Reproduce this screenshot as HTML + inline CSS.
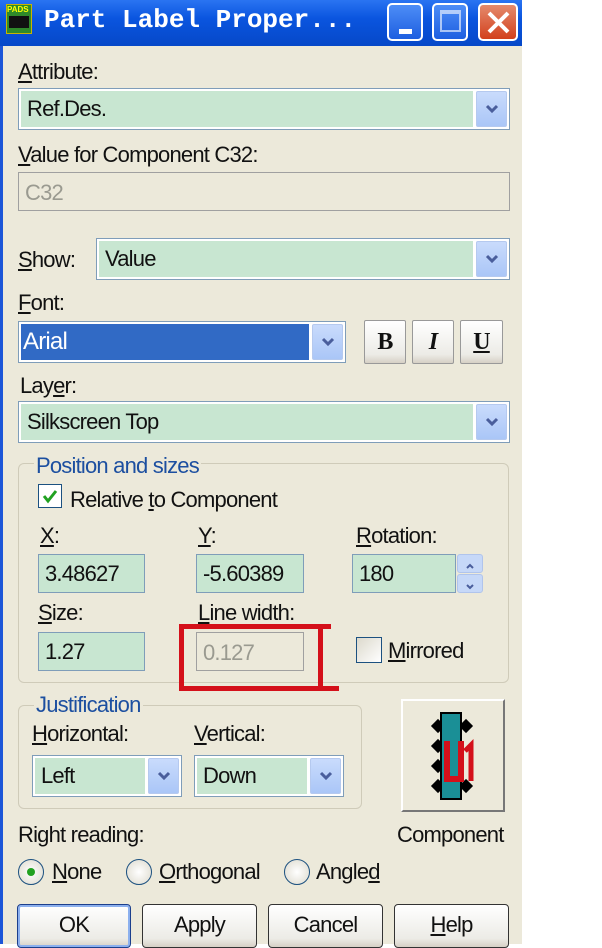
<!DOCTYPE html>
<html><head><meta charset="utf-8"><style>
*{margin:0;padding:0;box-sizing:border-box}
body{width:602px;height:944px;background:#fff;position:relative;overflow:hidden;font-family:"Liberation Sans",sans-serif;font-size:22px;color:#111;letter-spacing:-0.8px}
.a{position:absolute}
.dlg{left:0;top:0;width:522px;height:944px;background:#ECE9DA;border-left:3px solid #1C56D8}
.tb{left:0;top:0;width:522px;height:46px;background:linear-gradient(#2a74f2,#0a55df 40%,#0648c8)}
.tt{left:44px;top:5px;font-family:"Liberation Mono",monospace;font-weight:bold;font-size:26px;color:#fff;letter-spacing:0}
.wb{top:3px;width:36px;height:38px;border:2px solid #fff;border-radius:5px;background:linear-gradient(#4d8df7,#1e5fe0)}
.lbl{white-space:nowrap;margin-top:2px}
.cb{border:1px solid #7f9db9;background:#fff;padding:2px}
.cb .in{position:absolute;left:2px;top:2px;bottom:2px;background:#C8E6D1}
.cb .tx{position:absolute;left:8px;top:50%;transform:translateY(-50%);white-space:nowrap}
.arr{position:absolute;top:2px;bottom:2px;right:2px;width:31px;background:linear-gradient(#c9dbfc,#aac6f7);border:1px solid #b5c9ef;border-radius:2px}
.arr svg{position:absolute;left:8px;top:50%;margin-top:-5px}
.fld{border:1px solid #7f9db9;background:#C8E6D1}
.fld span{position:absolute;left:6px;top:50%;transform:translateY(-50%)}
.btn{border:1px solid #333;border-radius:4px;background:linear-gradient(#fff,#ecebe6 80%,#d6d0c5);text-align:center;line-height:40px}
.grp{border:1px solid #cfcbb9;border-radius:6px}
.gl{background:#ECE9DA;color:#1c4fa0;padding:0 2px}
.rad{width:26px;height:26px;border-radius:50%;border:1px solid #1c5180;background:radial-gradient(#fff,#dcd9cc)}
u{text-decoration:underline}
</style></head><body>
<div class="a dlg"></div>
<div class="a tb"></div>
<div class="a" style="left:6px;top:4px;width:26px;height:30px;background:#2f8a2a;border:1px solid #c9b400"><div style="font-size:8px;color:#ff0;font-weight:bold;letter-spacing:0">PADS</div><div style="margin:2px;height:12px;background:#111"></div></div>
<div class="a tt">Part Label Proper...</div>
<div class="a wb" style="left:387px"><div class="a" style="left:10px;top:24px;width:13px;height:5px;background:#fff"></div></div>
<div class="a wb" style="left:432px"><div class="a" style="left:6px;top:5px;width:21px;height:22px;border:2px solid #fff;border-top-width:4px;opacity:.6"></div></div>
<div class="a wb" style="left:478px;width:40px;background:linear-gradient(#e58a6c,#d2401d)"><svg class="a" style="left:6px;top:5px" width="25" height="25"><path d="M3 3L22 22M22 3L3 22" stroke="#fff" stroke-width="4"/></svg></div>

<div class="a lbl" style="left:18px;top:57px"><u>A</u>ttribute:</div>
<div class="a cb" style="left:18px;top:88px;width:492px;height:42px"><div class="in" style="right:36px"></div><div class="tx">Ref.Des.</div><div class="arr"><svg width="14" height="10"><path d="M2 2L7 7L12 2" stroke="#4a5e9c" stroke-width="3" fill="none"/></svg></div></div>
<div class="a lbl" style="left:18px;top:140px"><u>V</u>alue for Component C32:</div>
<div class="a" style="left:18px;top:172px;width:492px;height:39px;border:1px solid #a0a0a0;background:#ECE9DA"><span class="a" style="left:6px;top:7px;color:#9a9a90">C32</span></div>

<div class="a lbl" style="left:18px;top:245px"><u>S</u>how:</div>
<div class="a cb" style="left:96px;top:238px;width:414px;height:42px"><div class="in" style="right:36px"></div><div class="tx">Value</div><div class="arr"><svg width="14" height="10"><path d="M2 2L7 7L12 2" stroke="#4a5e9c" stroke-width="3" fill="none"/></svg></div></div>
<div class="a lbl" style="left:18px;top:288px"><u>F</u>ont:</div>
<div class="a cb" style="left:18px;top:321px;width:328px;height:42px"><div class="in" style="right:36px;background:#316AC5"></div><div class="tx" style="color:#fff;left:4px;font-size:24px">Arial</div><div class="arr"><svg width="14" height="10"><path d="M2 2L7 7L12 2" stroke="#4a5e9c" stroke-width="3" fill="none"/></svg></div></div>
<div class="a btn" style="left:364px;top:320px;width:42px;height:44px;border-color:#999;border-radius:2px;font-family:'Liberation Serif',serif;font-weight:bold;font-size:24px;line-height:42px">B</div>
<div class="a btn" style="left:412px;top:320px;width:42px;height:44px;border-color:#999;border-radius:2px;font-family:'Liberation Serif',serif;font-weight:bold;font-style:italic;font-size:24px;line-height:42px">I</div>
<div class="a btn" style="left:460px;top:320px;width:43px;height:44px;border-color:#999;border-radius:2px;font-family:'Liberation Serif',serif;font-weight:bold;font-size:24px;line-height:42px"><u>U</u></div>
<div class="a lbl" style="left:20px;top:371px">Lay<u>e</u>r:</div>
<div class="a cb" style="left:18px;top:401px;width:492px;height:42px"><div class="in" style="right:36px"></div><div class="tx">Silkscreen Top</div><div class="arr"><svg width="14" height="10"><path d="M2 2L7 7L12 2" stroke="#4a5e9c" stroke-width="3" fill="none"/></svg></div></div>

<div class="a grp" style="left:18px;top:463px;width:491px;height:220px"></div>
<div class="a gl lbl" style="left:34px;top:451px">Position and sizes</div>
<div class="a" style="left:38px;top:484px;width:24px;height:24px;border:1px solid #1c5180;background:#fff"><svg width="22" height="22"><path d="M5 11L9 16L17 6" stroke="#21a121" stroke-width="3" fill="none"/></svg></div>
<div class="a lbl" style="left:70px;top:485px">Relative <u>t</u>o Component</div>
<div class="a lbl" style="left:40px;top:521px"><u>X</u>:</div>
<div class="a lbl" style="left:198px;top:521px"><u>Y</u>:</div>
<div class="a lbl" style="left:356px;top:521px"><u>R</u>otation:</div>
<div class="a fld" style="left:38px;top:554px;width:107px;height:39px"><span>3.48627</span></div>
<div class="a fld" style="left:196px;top:554px;width:108px;height:39px"><span>-5.60389</span></div>
<div class="a fld" style="left:352px;top:554px;width:104px;height:39px"><span>180</span></div>
<div class="a" style="left:457px;top:554px;width:26px;height:19px;background:#c6d8f8;border:1px solid #b0c4ec;border-radius:3px"><svg width="24" height="17"><path d="M9 10L12 7L15 10" stroke="#4a5e9c" stroke-width="2" fill="none"/></svg></div>
<div class="a" style="left:457px;top:574px;width:26px;height:19px;background:#c6d8f8;border:1px solid #b0c4ec;border-radius:3px"><svg width="24" height="17"><path d="M9 7L12 10L15 7" stroke="#4a5e9c" stroke-width="2" fill="none"/></svg></div>
<div class="a lbl" style="left:38px;top:598px"><u>S</u>ize:</div>
<div class="a lbl" style="left:198px;top:598px"><u>L</u>ine width:</div>
<div class="a fld" style="left:38px;top:632px;width:107px;height:39px"><span>1.27</span></div>
<div class="a" style="left:196px;top:632px;width:108px;height:39px;border:1px solid #a0a0a0"><span class="a" style="left:6px;top:7px;color:#9a9a90">0.127</span></div>
<div class="a" style="left:356px;top:637px;width:26px;height:26px;border:1px solid #1c5180;background:linear-gradient(135deg,#dcd9cc,#fff)"></div>
<div class="a lbl" style="left:388px;top:636px"><u>M</u>irrored</div>
<div class="a" style="left:179px;top:624px;width:152px;height:5px;background:#d4101a"></div>
<div class="a" style="left:179px;top:624px;width:5px;height:66px;background:#d4101a"></div>
<div class="a" style="left:179px;top:686px;width:160px;height:5px;background:#d4101a"></div>
<div class="a" style="left:318px;top:624px;width:5px;height:66px;background:#d4101a"></div>

<div class="a grp" style="left:18px;top:705px;width:344px;height:104px"></div>
<div class="a gl lbl" style="left:34px;top:690px">Justification</div>
<div class="a lbl" style="left:32px;top:719px"><u>H</u>orizontal:</div>
<div class="a lbl" style="left:194px;top:719px"><u>V</u>ertical:</div>
<div class="a cb" style="left:32px;top:755px;width:150px;height:42px"><div class="in" style="right:36px"></div><div class="tx">Left</div><div class="arr"><svg width="14" height="10"><path d="M2 2L7 7L12 2" stroke="#4a5e9c" stroke-width="3" fill="none"/></svg></div></div>
<div class="a cb" style="left:194px;top:755px;width:150px;height:42px"><div class="in" style="right:36px"></div><div class="tx">Down</div><div class="arr"><svg width="14" height="10"><path d="M2 2L7 7L12 2" stroke="#4a5e9c" stroke-width="3" fill="none"/></svg></div></div>
<div class="a" style="left:401px;top:699px;width:104px;height:113px;border:2px solid;border-color:#fff #777 #777 #fff;background:#ECE9DA">
<svg width="100" height="109"><g fill="#000"><rect x="30" y="20" width="10" height="10" transform="rotate(45 35 25)"/><rect x="30" y="40" width="10" height="10" transform="rotate(45 35 45)"/><rect x="30" y="60" width="10" height="10" transform="rotate(45 35 65)"/><rect x="30" y="80" width="10" height="10" transform="rotate(45 35 85)"/><rect x="58" y="20" width="10" height="10" transform="rotate(45 63 25)"/><rect x="58" y="80" width="10" height="10" transform="rotate(45 63 85)"/></g><rect x="38" y="12" width="20" height="86" fill="#1a8f96" stroke="#000" stroke-width="2"/><path d="M44 40V78H58V40" stroke="#d4101a" stroke-width="6" fill="none"/><path d="M62 50L68 44V80" stroke="#d4101a" stroke-width="5" fill="none"/></svg></div>
<div class="a lbl" style="left:397px;top:820px">Component</div>
<div class="a lbl" style="left:18px;top:820px">Right reading:</div>
<div class="a rad" style="left:18px;top:859px"><div class="a" style="left:8px;top:8px;width:8px;height:8px;border-radius:50%;background:#21a121"></div></div>
<div class="a lbl" style="left:52px;top:857px"><u>N</u>one</div>
<div class="a rad" style="left:126px;top:859px"></div>
<div class="a lbl" style="left:159px;top:857px"><u>O</u>rthogonal</div>
<div class="a rad" style="left:284px;top:859px"></div>
<div class="a lbl" style="left:316px;top:857px">Angle<u>d</u></div>
<div class="a btn" style="left:17px;top:904px;width:114px;height:44px;border-color:#1c3f8c;box-shadow:inset 0 0 0 2px #8cb0ee">OK</div>
<div class="a btn" style="left:142px;top:904px;width:115px;height:44px">Apply</div>
<div class="a btn" style="left:268px;top:904px;width:115px;height:44px">Cancel</div>
<div class="a btn" style="left:394px;top:904px;width:115px;height:44px"><u>H</u>elp</div>
</body></html>
